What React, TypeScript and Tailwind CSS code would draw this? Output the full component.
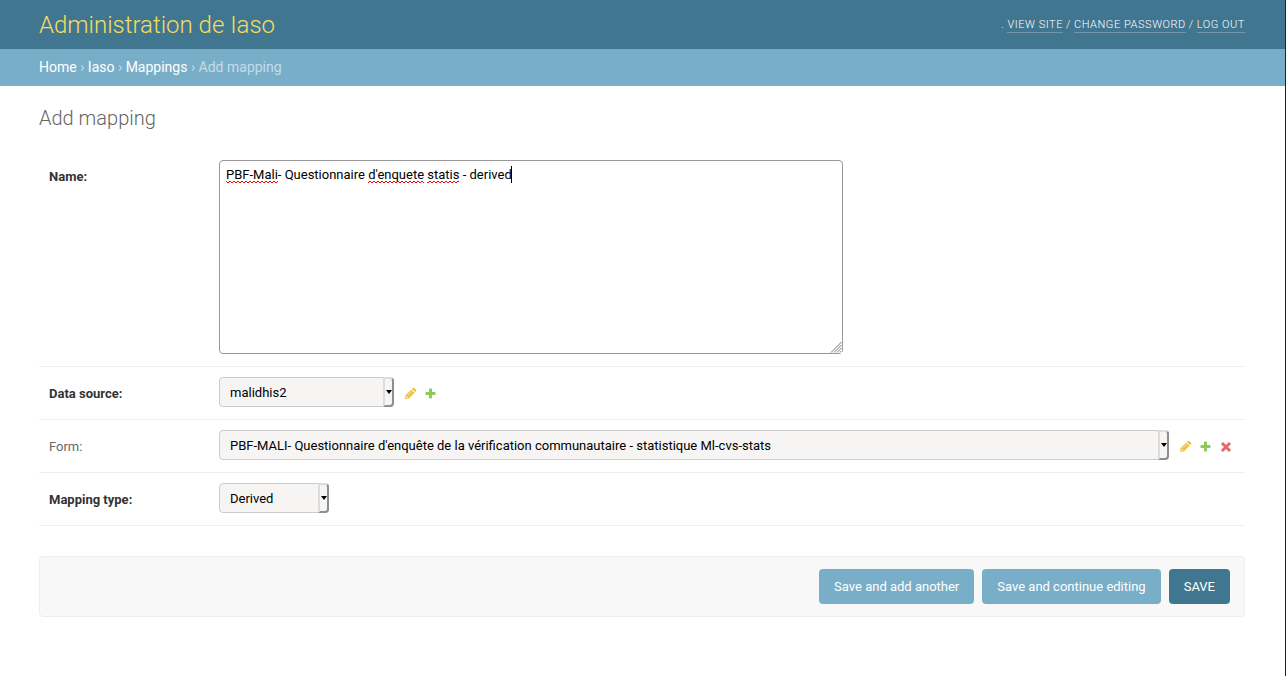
import React, { useState } from "react";
import type { FunctionComponent, ReactNode } from "react";

const userLinks = ["View site", "Change password", "Log out"];

const breadcrumbs = ["Home", "Iaso", "Mappings"];

const PencilIcon = () => (
  <svg width="13" height="13" viewBox="0 0 13 13" aria-hidden="true">
    <path d="M1 12 L1.5 8.2 L4.8 11.5 Z" fill="#efb933" />
    <path d="M1.5 8.2 L7.3 2.4 L10.6 5.7 L4.8 11.5 Z" fill="#f2c03e" />
    <path
      d="M7.9 1.8 L8.8 0.9 Q9.4 0.5 10 0.9 L12.1 3 Q12.5 3.6 12.1 4.2 L11.2 5.1 Z"
      fill="#efb933"
    />
    <path d="M3.6 8.3 L7.9 4" stroke="#fae3a3" strokeWidth="1" />
    <circle cx="2.7" cy="10.3" r="0.8" fill="#fff" />
  </svg>
);

const PlusIcon = () => (
  <svg width="13" height="13" viewBox="0 0 13 13" aria-hidden="true">
    <path
      d="M5.4 1.5h2.2q.4 0 .4.4V5h3.1q.4 0 .4.4v2.2q0 .4-.4.4H8v3.1q0 .4-.4.4H5.4q-.4 0-.4-.4V8H1.9q-.4 0-.4-.4V5.4q0-.4.4-.4H5V1.9q0-.4.4-.4z"
      fill="#8ccb5a"
    />
  </svg>
);

const CrossIcon = () => (
  <svg width="13" height="13" viewBox="0 0 13 13" aria-hidden="true">
    <path
      d="M4 4 L10 10 M10 4 L4 10"
      stroke="#e4686a"
      strokeWidth="3"
      strokeLinecap="square"
    />
  </svg>
);

const icons = {
  Change: <PencilIcon />,
  Add: <PlusIcon />,
  Delete: <CrossIcon />,
};

type Action = keyof typeof icons;

// Raised drop-down button at the right end of every select
const SelectArrow = () => (
  <span
    aria-hidden="true"
    className="pointer-events-none absolute inset-y-0 right-0 flex w-[11px] items-center justify-center rounded-r border-2 border-t-[#dcdcdc] border-r-[#8e8e8e] border-b-[#8e8e8e] border-l-[#dcdcdc] bg-[#f6f5f4]"
  >
    <svg width="6" height="4" viewBox="0 0 6 4" className="shrink-0">
      <path d="M0 0h6L3 4z" fill="#000" />
    </svg>
  </span>
);

// Red waves under the words that the spell checker does not know
const SpellingMarks = () => (
  <svg
    aria-hidden="true"
    className="pointer-events-none absolute top-[6px] left-[7px]"
    width="290"
    height="20"
  >
    <defs>
      <pattern
        id="wave"
        y="14"
        width="4"
        height="5"
        patternUnits="userSpaceOnUse"
      >
        <path
          d="M-1 2 L0 1 L2 3 L4 1 L5 2"
          fill="none"
          stroke="#f00"
          strokeWidth="1"
        />
      </pattern>
    </defs>
    <rect x="0" y="14" width="52" height="5" fill="url(#wave)" />
    <rect x="142" y="14" width="56" height="5" fill="url(#wave)" />
    <rect x="201" y="14" width="32" height="5" fill="url(#wave)" />
    <rect x="285" y="0" width="1" height="17" fill="#000" />
  </svg>
);

// Diagonal hatching over the resize corner
const ResizeGrip = () => (
  <svg
    aria-hidden="true"
    className="pointer-events-none absolute right-[1px] bottom-[1px] bg-white"
    width="12"
    height="12"
    viewBox="0 0 12 12"
  >
    <path
      d="M1 11.5 L11.5 1 M4 11.5 L11.5 4 M7 11.5 L11.5 7 M10 11.5 L11.5 10"
      stroke="#777"
      strokeWidth="1"
    />
  </svg>
);

interface FormRowProps {
  id: string;
  label: string;
  required?: boolean;
  children: ReactNode;
}

const FormRow = ({ id, label, required, children }: FormRowProps) => (
  <div className="flex items-start border-b border-[#eee] px-[10px] pt-[10px] pb-3">
    <label
      htmlFor={id}
      className={`w-[170px] shrink-0 pt-[9px] text-[13px] leading-4 ${
        required ? "font-bold text-[#333]" : "text-[#666]"
      }`}
    >
      {label}
    </label>
    {children}
  </div>
);

interface SelectFieldProps {
  id: string;
  value: string;
  size: string;
  actions?: Action[];
}

const SelectField = ({ id, value, size, actions = [] }: SelectFieldProps) => (
  <>
    <div className={`relative ${size}`}>
      <select
        id={id}
        className="block h-[30px] w-full appearance-none rounded border border-[#ccc] bg-[#f6f5f4] pt-[2px] pr-4 pl-[10px] text-[13px] text-black"
      >
        <option>{value}</option>
      </select>
      <SelectArrow />
    </div>
    {actions.length > 0 && (
      <div className="mr-[3px] ml-[10px] flex shrink-0 gap-[7px] pt-[10px]">
        {actions.map((action) => (
          <button
            key={action}
            type="button"
            title={action}
            aria-label={action}
            className="h-[13px] w-[13px]"
          >
            {icons[action]}
          </button>
        ))}
      </div>
    )}
  </>
);

const App: FunctionComponent = () => {
  const [name, setName] = useState(
    "PBF-Mali- Questionnaire d'enquete statis - derived"
  );

  return (
    <div className="min-h-screen border-r border-[#222] bg-white font-[Roboto,sans-serif] text-[#333]">
      <header className="flex items-end justify-between bg-[#417690] pt-[10px] pr-10 pb-2 pl-[39px]">
        <div className="text-2xl leading-[31px] font-light text-[#f5dd5d]">
          Administration de Iaso
        </div>
        <div className="flex gap-[3px] pb-2 text-[11px] leading-[14px] font-light tracking-wider text-[#ffc] uppercase">
          <span className="text-white">.</span>
          {userLinks.map((link, idx) => (
            <React.Fragment key={link}>
              {idx > 0 && <span>/</span>}
              <a
                href="#"
                className="border-b border-white/25 text-white hover:border-white"
              >
                {link}
              </a>
            </React.Fragment>
          ))}
        </div>
      </header>

      <nav className="bg-[#79aec8] py-2 pr-10 pl-[39px] text-sm leading-[21px] text-[#c4dce8]">
        {breadcrumbs.map((crumb) => (
          <React.Fragment key={crumb}>
            <a href="#" className="text-white">
              {crumb}
            </a>
            {" › "}
          </React.Fragment>
        ))}
        Add mapping
      </nav>

      <main className="pt-5 pr-10 pb-10 pl-[39px]">
        <h1 className="mb-5 text-xl leading-6 font-light text-[#666]">
          Add mapping
        </h1>

        <form onSubmit={(e) => e.preventDefault()}>
          <FormRow id="name" label="Name:" required>
            <div className="relative w-[624px]">
              <textarea
                id="name"
                rows={10}
                spellCheck={false}
                value={name}
                onChange={(e) => setName(e.target.value)}
                className="block h-[194px] w-full rounded border border-[#999] px-[6px] py-[5px] text-[13px] leading-[18px] text-black outline-none"
              />
              <SpellingMarks />
              <ResizeGrip />
            </div>
          </FormRow>
          <FormRow id="source" label="Data source:" required>
            <SelectField
              id="source"
              value="malidhis2"
              size="w-[175px]"
              actions={["Change", "Add"]}
            />
          </FormRow>
          <FormRow id="form" label="Form:">
            <SelectField
              id="form"
              value="PBF-MALI- Questionnaire d'enquête de la vérification communautaire - statistique Ml-cvs-stats"
              size="min-w-0 flex-1"
              actions={["Change", "Add", "Delete"]}
            />
          </FormRow>
          <FormRow id="type" label="Mapping type:" required>
            <SelectField id="type" value="Derived" size="w-[110px]" />
          </FormRow>

          <div className="mt-[30px] flex justify-end gap-2 rounded border border-[#eee] bg-[#f8f8f8] px-[14px] py-3 text-[13px] text-white">
            <button
              type="button"
              className="h-[35px] rounded bg-[#79aec8] px-[15px] hover:bg-[#609ab6]"
            >
              Save and add another
            </button>
            <button
              type="button"
              className="h-[35px] rounded bg-[#79aec8] px-[15px] hover:bg-[#609ab6]"
            >
              Save and continue editing
            </button>
            <button
              type="submit"
              className="h-[35px] rounded bg-[#417690] px-[15px] uppercase hover:bg-[#205067]"
            >
              Save
            </button>
          </div>
        </form>
      </main>
    </div>
  );
};

export default App;
